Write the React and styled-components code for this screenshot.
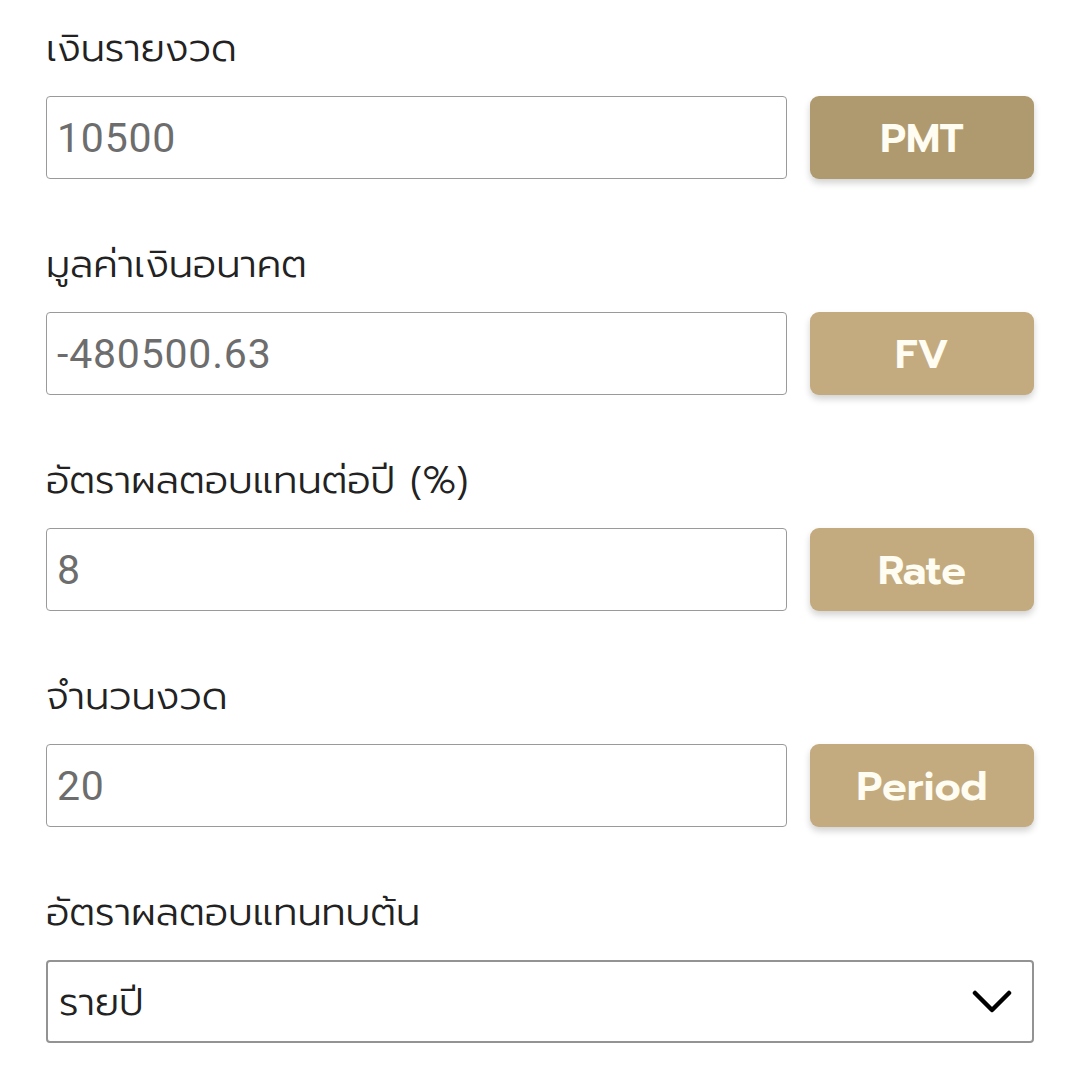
import React, { useState } from 'react'
import styled, { createGlobalStyle } from 'styled-components'

const Global = createGlobalStyle`
  body {
    margin: 0;
    background: #fff;
    font-family: Prompt, Kanit, "Noto Sans Thai", sans-serif;
  }
`

const Form = styled.div`
  padding: 23px 45px 0 46px;
  display: flex;
  flex-direction: column;
  gap: 60px;
`

const Field = styled.div`
  display: flex;
  flex-direction: column;
`

const Label = styled.label`
  font-size: 38.8px;
  font-weight: 300;
  line-height: 50px;
  height: 50px;
  color: #222;
  margin-bottom: 23px;
  white-space: nowrap;
`

const Row = styled.div`
  display: flex;
  gap: 23px;
  height: 83px;
`

const Input = styled.input`
  flex: 1;
  min-width: 0;
  box-sizing: border-box;
  height: 83px;
  border: 1.5px solid #9a9a9a;
  border-radius: 4px;
  padding: 0 10px;
  font-family: Roboto, "Liberation Sans", sans-serif;
  font-size: 41px;
  letter-spacing: 0.8px;
  color: #6d6d6d;
  outline: none;
`

const CalcButton = styled.button`
  width: 224px;
  flex: none;
  height: 83px;
  border: none;
  border-radius: 9px;
  background: ${p => (p.$active ? '#af9a6f' : '#c3ab7f')};
  color: #fffcf2;
  font-family: Prompt, Kanit, Lato, sans-serif;
  font-weight: 600;
  font-size: 41px;
  box-shadow: 0 4px 7px rgba(0, 0, 0, 0.18);
  cursor: pointer;
`

const SelectBox = styled.div`
  box-sizing: border-box;
  height: 83px;
  border: 2px solid #939393;
  border-top-width: 2.5px;
  border-radius: 4px;
  display: flex;
  align-items: center;
  justify-content: space-between;
  padding: 0 20px 0 11px;
  font-size: 38.8px;
  font-weight: 300;
  color: #222;
`

const Chevron = () => (
  <svg width="40" height="26" viewBox="0 0 40 26" fill="none">
    <path d="M3 4 L20 21 L37 4" stroke="#000" strokeWidth="4.5" strokeLinecap="round" strokeLinejoin="round" />
  </svg>
)

const fields = [
  { label: 'เงินรายงวด', value: '10500', btn: 'PMT', active: true },
  { label: 'มูลค่าเงินอนาคต', value: '-480500.63', btn: 'FV' },
  { label: 'อัตราผลตอบแทนต่อปี (%)', value: '8', btn: 'Rate' },
  { label: 'จำนวนงวด', value: '20', btn: 'Period' },
]

export default function App() {
  const [vals, setVals] = useState(fields.map(f => f.value))
  return (
    <>
      <Global />
      <Form>
        {fields.map((f, i) => (
          <Field key={f.btn}>
            <Label>{f.label}</Label>
            <Row>
              <Input
                value={vals[i]}
                onChange={e => setVals(vals.map((v, j) => (j === i ? e.target.value : v)))}
              />
              <CalcButton $active={f.active}>{f.btn}</CalcButton>
            </Row>
          </Field>
        ))}
        <Field>
          <Label>อัตราผลตอบแทนทบต้น</Label>
          <SelectBox>
            <span>รายปี</span>
            <Chevron />
          </SelectBox>
        </Field>
      </Form>
    </>
  )
}
